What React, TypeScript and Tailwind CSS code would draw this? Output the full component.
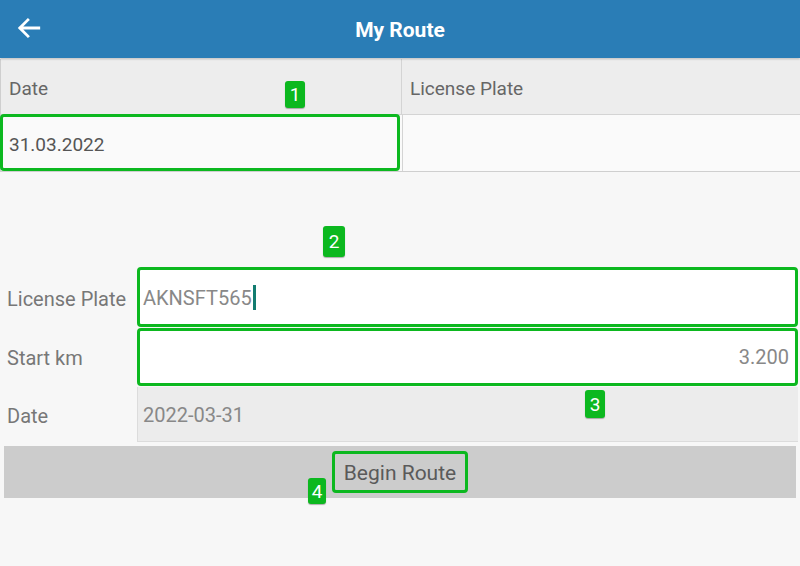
import React from "react";

const Badge = ({ n, className }: { n: string; className: string }) => (
  <span
    className={`absolute flex items-center justify-center rounded-[3px] bg-[#0cb81f] text-white text-[19px] leading-none shadow-[0_1px_1px_rgba(0,0,0,0.3)] ${className}`}
  >
    {n}
  </span>
);

const App = () => {
  return (
    <div className="relative w-[800px] h-[566px] overflow-hidden bg-[#f7f7f7] font-['Roboto',sans-serif] text-[#666]">
      {/* Top bar */}
      <div className="relative flex h-[58px] items-center justify-center pt-[3px] bg-[#2a7db6] shadow-[0_1px_2px_rgba(0,0,0,0.25)]">
        <svg
          className="absolute left-[16px] top-[15px]"
          width="26"
          height="26"
          viewBox="0 0 24 24"
          fill="none"
          stroke="white"
          strokeWidth="2.6"
          strokeLinecap="square"
        >
          <path d="M21 12H4M11 4.5L3.5 12 11 19.5" />
        </svg>
        <h1 className="text-[21px] font-bold text-white">My Route</h1>
      </div>

      {/* Route table */}
      <div className="mt-[1px] border-l border-b border-[#cfcfcf] bg-[#fafafa]">
        <div className="grid grid-cols-[401px_1fr] h-[56px] bg-[#ededed] border-b border-[#d4d4d4]">
          <div className="flex items-center pl-[8px] pt-[5px] text-[19px] border-r border-[#d4d4d4]">Date</div>
          <div className="flex items-center pl-[8px] pt-[5px] text-[19px]">License Plate</div>
        </div>
        <div className="grid grid-cols-[401px_1fr] h-[56px]">
          <div className="flex items-center pl-[6px] pt-[5px] text-[19px] text-[#555] border-[3px] border-[#0cb81f] rounded-[4px] -ml-[1px] -mt-[1px] w-[400px]">
            31.03.2022
          </div>
          <div className="border-l border-[#d4d4d4]" />
        </div>
      </div>

      {/* Form */}
      <div className="mt-[95px] flex flex-col">
        <div className="flex h-[60px] items-center">
          <div className="w-[137px] pl-[7px] pt-[3px] text-[20px] text-[#777]">License Plate</div>
          <div className="flex flex-1 mr-[2px] h-[60px] items-center bg-white border-[3px] border-[#0cb81f] rounded-[4px] pl-[3px] pt-[1px] text-[20px] text-[#888]">
            AKNSFT565
            <span className="ml-[1px] inline-block w-[3px] h-[25px] bg-[#127c70]" />
          </div>
        </div>
        <div className="flex h-[59px] items-center">
          <div className="w-[137px] pl-[7px] pt-[2px] text-[20px] text-[#777]">Start km</div>
          <div className="flex flex-1 mr-[2px] h-[58px] items-center justify-end bg-white border-[3px] border-[#0cb81f] rounded-[4px] pr-[6px] pt-[1px] text-[20px] text-[#888]">
            3.200
          </div>
        </div>
        <div className="flex h-[56px] items-center">
          <div className="w-[137px] pl-[7px] pt-[3px] text-[20px] text-[#777]">Date</div>
          <div className="flex flex-1 mr-[2px] h-[55px] items-center bg-[#ececec] border-b border-l border-[#dcdcdc] pl-[5px] pt-[3px] text-[20px] text-[#888]">
            2022-03-31
          </div>
        </div>
        <div className="mx-[4px] mt-[4px] flex h-[52px] items-center justify-center bg-[#cccccc]">
          <button className="h-[42px] w-[136px] border-[3px] border-[#0cb81f] rounded-[4px] pt-[3px] text-[21px] text-[#5a5a5a]">
            Begin Route
          </button>
        </div>
      </div>

      <Badge n="1" className="left-[285px] top-[81px] w-[20px] h-[27px]" />
      <Badge n="2" className="left-[323px] top-[226px] w-[22px] h-[31px]" />
      <Badge n="3" className="left-[585px] top-[390px] w-[20px] h-[28px]" />
      <Badge n="4" className="left-[308px] top-[478px] w-[18px] h-[26px]" />
    </div>
  );
};

export default App;
